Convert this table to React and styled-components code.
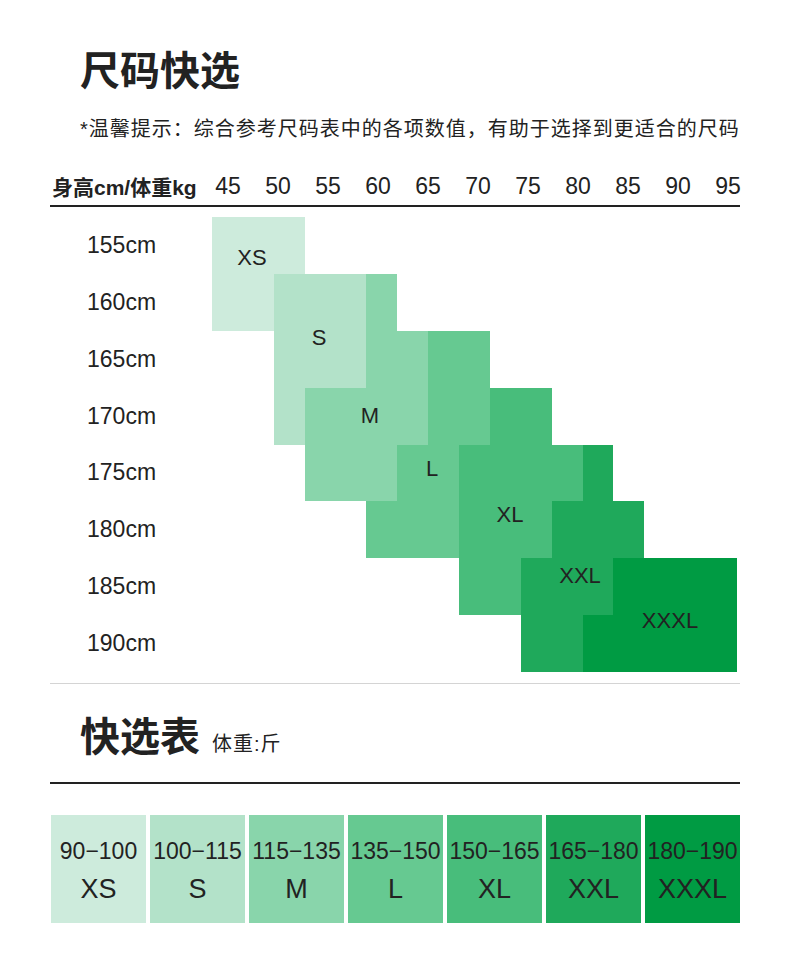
import React from "react";
import styled, { createGlobalStyle } from "styled-components";

const GlobalStyle = createGlobalStyle`
  body {
    margin: 0;
    background: #fff;
    color: #222;
    font-family: "Liberation Sans", "Noto Sans CJK SC", sans-serif;
  }
`;

const colors = {
  XS: "#cdebdc",
  S: "#b3e2c9",
  M: "#89d5ab",
  L: "#66c991",
  XL: "#48bd7b",
  XXL: "#1fa95b",
  XXXL: "#009b43",
};

const weights = [45, 50, 55, 60, 65, 70, 75, 80, 85, 90, 95];
const heights = [155, 160, 165, 170, 175, 180, 185, 190];

// [size, row, first column, column span]
const segments = [
  ["XS", 0, 0, 3],
  ["XS", 1, 0, 2], ["S", 1, 2, 3], ["M", 1, 5, 1],
  ["S", 2, 2, 3], ["M", 2, 5, 2], ["L", 2, 7, 2],
  ["S", 3, 2, 1], ["M", 3, 3, 4], ["L", 3, 7, 2], ["XL", 3, 9, 2],
  ["M", 4, 3, 3], ["L", 4, 6, 2], ["XL", 4, 8, 4], ["XXL", 4, 12, 1],
  ["L", 5, 5, 3], ["XL", 5, 8, 3], ["XXL", 5, 11, 3],
  ["XL", 6, 8, 2], ["XXL", 6, 10, 3], ["XXXL", 6, 13, 4],
  ["XXL", 7, 10, 2], ["XXXL", 7, 12, 5],
];

// label centres inside the chart, in px
const chartLabels = [
  ["XS", 202, 41],
  ["S", 269, 121],
  ["M", 320, 199],
  ["L", 382, 252],
  ["XL", 460, 298],
  ["XXL", 530, 359],
  ["XXXL", 620, 404],
];

const quickList = [
  ["XS", "90−100"],
  ["S", "100−115"],
  ["M", "115−135"],
  ["L", "135−150"],
  ["XL", "150−165"],
  ["XXL", "165−180"],
  ["XXXL", "180−190"],
];

const Page = styled.div`
  width: 790px;
  padding: 47px 50px 30px;
  box-sizing: border-box;
`;

const Title = styled.h1`
  margin: 0;
  padding-left: 30px;
  font-size: 40px;
  line-height: 48px;
  font-weight: 700;
  color: #222;
`;

const Hint = styled.p`
  margin: 20px 0 0;
  padding-left: 30px;
  font-size: 20px;
  line-height: 28px;
  letter-spacing: 1px;
  white-space: nowrap;
`;

const HeaderRow = styled.div`
  display: flex;
  align-items: center;
  margin-top: 29px;
  padding-bottom: 5px;
  border-bottom: 2px solid #222;
  height: 28px;
`;

const HeaderLabel = styled.div`
  flex: none;
  width: 151px;
  padding-left: 2px;
  font-size: 21px;
  font-weight: 700;
  white-space: nowrap;
`;

const WeightCell = styled.div`
  width: 50px;
  flex: none;
  text-align: center;
  font-size: 23px;
`;

const Chart = styled.div`
  position: relative;
  display: grid;
  grid-template-columns: 162px repeat(17, 30.88px);
  grid-template-rows: repeat(8, 56.875px);
  margin-top: 10px;
  padding-bottom: 11px;
  border-bottom: 1px solid #d4d4d4;
`;

const HeightLabel = styled.div`
  grid-column: 1;
  grid-row: ${(p) => p.$row + 1};
  display: flex;
  align-items: center;
  padding-left: 37px;
  font-size: 23px;
`;

const Block = styled.div`
  grid-row: ${(p) => p.$row + 1};
  grid-column: ${(p) => p.$col + 2} / span ${(p) => p.$span};
  background: ${(p) => colors[p.$size]};
`;

const BlockLabel = styled.span`
  position: absolute;
  left: ${(p) => p.$x}px;
  top: ${(p) => p.$y}px;
  transform: translate(-50%, -50%);
  font-size: 22px;
  color: #222;
`;

const SectionHead = styled.div`
  display: flex;
  align-items: baseline;
  gap: 12px;
  margin-top: 29px;
  padding: 0 0 21px 30px;
  border-bottom: 2px solid #222;
`;

const SectionTitle = styled.h2`
  margin: 0;
  font-size: 40px;
  line-height: 48px;
  font-weight: 700;
`;

const Unit = styled.span`
  font-size: 20px;
  letter-spacing: 1px;
`;

const Tiles = styled.div`
  display: flex;
  gap: 4px;
  margin-top: 31px;
  padding-left: 1px;
`;

const Tile = styled.div`
  flex: 1;
  height: 108px;
  display: flex;
  flex-direction: column;
  align-items: center;
  padding-top: 22px;
  box-sizing: border-box;
  background: ${(p) => colors[p.$size]};
`;

const Range = styled.div`
  font-size: 23px;
  line-height: 28px;
  white-space: nowrap;
`;

const SizeName = styled.div`
  margin-top: 8px;
  font-size: 27px;
  line-height: 32px;
`;

export default function App() {
  return (
    <Page>
      <GlobalStyle />
      <Title>尺码快选</Title>
      <Hint>*温馨提示：综合参考尺码表中的各项数值，有助于选择到更适合的尺码</Hint>

      <HeaderRow>
        <HeaderLabel>身高cm/体重kg</HeaderLabel>
        {weights.map((w) => (
          <WeightCell key={w}>{w}</WeightCell>
        ))}
      </HeaderRow>

      <Chart>
        {heights.map((h, i) => (
          <HeightLabel key={h} $row={i}>
            {h}cm
          </HeightLabel>
        ))}
        {segments.map(([size, row, col, span], i) => (
          <Block key={i} $size={size} $row={row} $col={col} $span={span} />
        ))}
        {chartLabels.map(([size, x, y]) => (
          <BlockLabel key={size} $x={x} $y={y}>
            {size}
          </BlockLabel>
        ))}
      </Chart>

      <SectionHead>
        <SectionTitle>快选表</SectionTitle>
        <Unit>体重:斤</Unit>
      </SectionHead>

      <Tiles>
        {quickList.map(([size, range]) => (
          <Tile key={size} $size={size}>
            <Range>{range}</Range>
            <SizeName>{size}</SizeName>
          </Tile>
        ))}
      </Tiles>
    </Page>
  );
}
